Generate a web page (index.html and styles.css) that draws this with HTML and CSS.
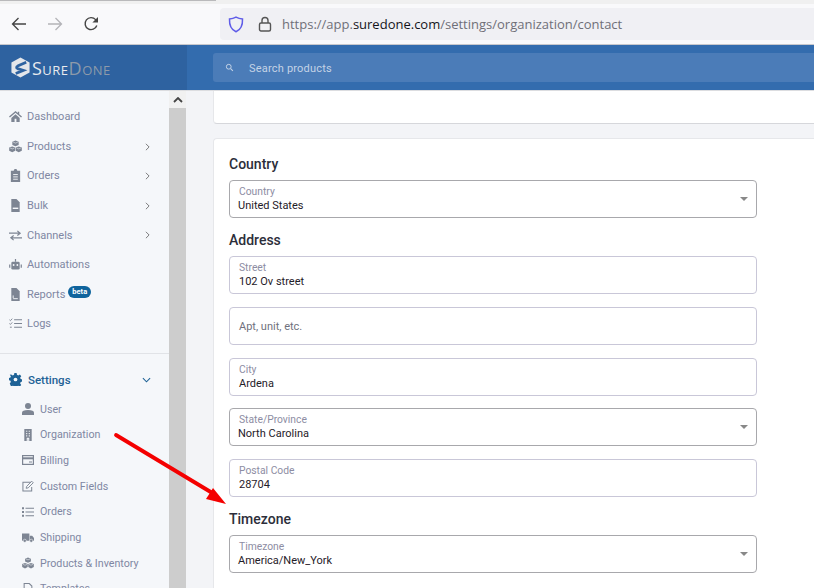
FILE: index.html
```html
<!DOCTYPE html>
<html lang="en">
<head>
<meta charset="utf-8">
<title>SureDone - Contact</title>
<link rel="stylesheet" href="styles.css">
</head>
<body>
<div class="page">
  <header class="browser">
    <div class="topstrip"><div class="topstrip-dark"></div></div>
    <div class="toolbar">
      <div class="navbtns">
        <svg class="nav" viewBox="0 0 16 16"><path d="M15 8H1.500M7.500 2L1.500 8l6 6" fill="none" stroke="#444" stroke-width="1.300"/></svg>
        <svg class="nav" viewBox="0 0 16 16"><path d="M1 8h13.500M8.500 2l6 6-6 6" fill="none" stroke="#b4b4b8" stroke-width="1.300"/></svg>
        <svg class="nav" viewBox="0 0 16 16"><path d="M13.800 9.500A6 6 0 1 1 12.600 3.600L14.500 5.500" fill="none" stroke="#444" stroke-width="1.400"/><path d="M15 1v5.600H9.400z" fill="#444"/></svg>
      </div>
      <div class="urlbar">
        <svg class="shield" viewBox="0 0 16 17"><path d="M8 1.200c2 1.100 4.200 1.700 6.500 1.800.3 6-1.800 10.700-6.500 12.800C3.300 13.700 1.200 9 1.500 3 3.800 2.900 6 2.300 8 1.200z" fill="none" stroke="#5f5ce8" stroke-width="1.500"/></svg>
        <svg class="lock" viewBox="0 0 14 16"><rect x="1.500" y="7" width="11" height="8" rx="1.500" fill="none" stroke="#555" stroke-width="1.400"/><path d="M4 7V4.500a3 3 0 0 1 6 0V7" fill="none" stroke="#555" stroke-width="1.400"/></svg>
        <span class="url">https://app.<b>suredone.com</b>/settings/organization/contact</span>
      </div>
    </div>
  </header>

  <div class="apphead">
    <div class="brand">
      <svg class="logo" viewBox="0 0 22 22"><path d="M11 .5l9.500 5.300v10.400L11 21.500 1.500 16.200V5.800z" fill="#e4e6ea"/><path d="M17 5.500L8 9.500c-1.500.8-1.500 2 0 2.700l6 1.800-8 3.200" fill="none" stroke="#2e62a0" stroke-width="2.800"/></svg>
      <span class="brandname"><span class="sure">Sure</span><span class="done">Done</span></span>
    </div>
    <div class="searchwrap">
      <div class="search">
        <svg class="searchicon" viewBox="0 0 12 12"><circle cx="5" cy="5" r="3.200" fill="none" stroke="#c4d3e6" stroke-width="1.300"/><path d="M7.500 7.500l3 3" stroke="#c4d3e6" stroke-width="1.500"/></svg>
        <span class="searchtext">Search products</span>
      </div>
    </div>
  </div>

  <div class="body">
    <nav class="sidebar">
      <ul class="menu">
        <li><svg class="ic" viewBox="0 0 14 12"><path d="M7 0L0 6l1 1 6-5 6 5 1-1-3-2.500V1H9.500v1.200zM2.500 7.500V12H6V8.500h2V12h3.500V7.500L7 3.500z" fill="#7d8593"/></svg>Dashboard</li>
        <li><svg class="ic" viewBox="0 0 14 13"><path d="M7 0l3.400 1.400v3.400L7 6.200 3.600 4.800V1.400zM3.500 6.400l3.200 1.300v3.500L3.500 12.800.2 11.200V7.700zM10.500 6.400l3.300 1.300v3.500l-3.300 1.600-3.200-1.600V7.700z" fill="#7d8593"/><path d="M4.500 1.800L7 2.800l2.500-1M1.200 8.100l2.300 1 2.300-1M8.200 8.100l2.300 1 2.300-1" fill="none" stroke="#f5f7fa" stroke-width=".6"/></svg>Products<svg class="chev" viewBox="0 0 6 10"><path d="M1 1l4 4-4 4" fill="none" stroke="#777" stroke-width="1.200"/></svg></li>
        <li><svg class="ic" viewBox="0 0 14 14"><path d="M2 2h3l1-2h2l1 2h3v12H2z" fill="#7d8593"/><path d="M4.500 6h5M4.500 8.500h5M4.500 11h5" stroke="#f5f7fa"/></svg>Orders<svg class="chev" viewBox="0 0 6 10"><path d="M1 1l4 4-4 4" fill="none" stroke="#777" stroke-width="1.200"/></svg></li>
        <li><svg class="ic" viewBox="0 0 14 14"><path d="M2.500 0H8l3.500 3.500V14h-9z" fill="#7d8593"/><path d="M4 10h6" stroke="#f5f7fa" stroke-width="1.500"/></svg>Bulk<svg class="chev" viewBox="0 0 6 10"><path d="M1 1l4 4-4 4" fill="none" stroke="#777" stroke-width="1.200"/></svg></li>
        <li><svg class="ic" viewBox="0 0 14 12"><path d="M0 3.500h11M9 1l3 2.500L9 6M14 8.500H3M5 6l-3 2.500L5 11" fill="none" stroke="#7d8593" stroke-width="1.300"/></svg>Channels<svg class="chev" viewBox="0 0 6 10"><path d="M1 1l4 4-4 4" fill="none" stroke="#777" stroke-width="1.200"/></svg></li>
        <li><svg class="ic" viewBox="0 0 14 12"><rect x="2.500" y="3" width="9" height="8.500" rx="1.500" fill="#7d8593"/><path d="M7 0v3M.8 6v3.500M13.200 6v3.500" stroke="#7d8593" stroke-width="1.300"/><circle cx="5" cy="6.500" r="1" fill="#f5f7fa"/><circle cx="9" cy="6.500" r="1" fill="#f5f7fa"/></svg>Automations</li>
        <li><svg class="ic" viewBox="0 0 14 14"><path d="M2.500 0H8l3.500 3.500V14h-9z" fill="#7d8593"/><path d="M4.500 11.500h5M4.500 11V8" stroke="#f5f7fa"/></svg>Reports<span class="beta">beta</span></li>
        <li><svg class="ic" viewBox="0 0 14 12"><path d="M5.500 2h8.500M5.500 6h8.500M5.500 10h8.500" stroke="#7d8593" stroke-width="1.200"/><path d="M.5 2l1 1 2-2.200M.5 6l1 1 2-2.200M1 10h2" fill="none" stroke="#7d8593" stroke-width="1"/></svg>Logs</li>
      </ul>
      <div class="divider"></div>
      <div class="settings"><svg class="ic" viewBox="0 0 14 14"><path d="M5.800 0h2.400l.4 2 1.300.6 1.800-1 1.500 1.800-1.200 1.600.4 1.300 1.600.7v2.200l-1.600.7-.4 1.300 1.200 1.600-1.500 1.800-1.800-1-1.300.6-.4 2H5.800l-.4-2-1.300-.6-1.800 1L.8 11.300 2 9.700l-.4-1.300L0 7.700V5.500l1.600-.7L2 3.500.8 1.900l1.500-.3 1.800 1 1.300-.6z" fill="#1e6296"/><circle cx="7" cy="7" r="2" fill="#f5f7fa"/></svg>Settings<svg class="chevd" viewBox="0 0 10 6"><path d="M1 1l4 4 4-4" fill="none" stroke="#1e6296" stroke-width="1.200"/></svg></div>
      <ul class="submenu">
        <li><svg class="ic" viewBox="0 0 12 12"><circle cx="6" cy="3" r="3" fill="#7d8593"/><path d="M0 12V9.500C0 8 2 7 6 7s6 1 6 2.500V12z" fill="#7d8593"/></svg>User</li>
        <li><svg class="ic" viewBox="0 0 12 13"><path d="M2 0h8v13H2z" fill="#7d8593"/><path d="M4 2.500h1.200M6.800 2.500H8M4 5h1.200M6.800 5H8M4 7.500h1.200M6.800 7.500H8M5.200 13v-3h1.600v3" stroke="#f5f7fa" stroke-width="1.200" fill="none"/></svg>Organization</li>
        <li><svg class="ic" viewBox="0 0 12 10"><rect x=".6" y=".6" width="10.800" height="8.800" fill="none" stroke="#7d8593" stroke-width="1.200"/><path d="M.6 3.300h10.800" stroke="#7d8593" stroke-width="2"/><path d="M7 7h3" stroke="#7d8593"/></svg>Billing</li>
        <li><svg class="ic" viewBox="0 0 13 12"><path d="M9.500 2H1v9.500h9.500V7" fill="none" stroke="#7d8593" stroke-width="1.100"/><path d="M4.500 8.500l.5-2L10.500.8l1.700 1.700-5.500 5.500z" fill="none" stroke="#7d8593"/></svg>Custom Fields</li>
        <li><svg class="ic" viewBox="0 0 12 10"><path d="M3.500 1.200H12M3.500 5H12M3.500 8.800H12" stroke="#7d8593" stroke-width="1.100"/><path d="M0 .2h2v2H0zM0 4h2v2H0zM0 7.800h2v2H0z" fill="#7d8593"/></svg>Orders</li>
        <li><svg class="ic" viewBox="0 0 13 10"><path d="M0 0h8v8H0zM8.500 2.500h2.500l2 2.500v3H8.500z" fill="#7d8593"/><circle cx="3" cy="8" r="1.700" fill="#7d8593" stroke="#f5f7fa" stroke-width=".6"/><circle cx="10" cy="8" r="1.700" fill="#7d8593" stroke="#f5f7fa" stroke-width=".6"/></svg>Shipping</li>
        <li><svg class="ic" viewBox="0 0 14 13"><path d="M7 0l3.400 1.400v3.400L7 6.200 3.600 4.800V1.400zM3.500 6.400l3.200 1.300v3.500L3.500 12.800.2 11.200V7.700zM10.500 6.400l3.300 1.300v3.500l-3.300 1.600-3.200-1.600V7.700z" fill="#7d8593"/><path d="M4.500 1.800L7 2.800l2.500-1M1.200 8.100l2.300 1 2.300-1M8.200 8.100l2.300 1 2.300-1" fill="none" stroke="#f5f7fa" stroke-width=".6"/></svg>Products &amp; Inventory</li>
        <li><svg class="ic" viewBox="0 0 12 14"><path d="M1.500.6H7.500l3 3V13.400h-9z" fill="none" stroke="#7d8593" stroke-width="1.200"/></svg>Templates</li>
      </ul>
    </nav>

    <div class="scrollbar"><div class="scrollup"><svg viewBox="0 0 10 6"><path d="M1 5l4-4 4 4" fill="none" stroke="#444" stroke-width="1.800"/></svg></div></div>

    <main class="content">
      <div class="card card-top"></div>
      <div class="card card-form">
        <h2>Country</h2>
        <div class="field select"><label>Country</label><div class="value">United States</div><i class="caret"></i></div>
        <h2>Address</h2>
        <div class="stack">
          <div class="field"><label>Street</label><div class="value">102 Ov street</div></div>
          <div class="field empty"><span class="placeholder">Apt, unit, etc.</span></div>
          <div class="field"><label>City</label><div class="value">Ardena</div></div>
          <div class="field select"><label>State/Province</label><div class="value">North Carolina</div><i class="caret"></i></div>
          <div class="field"><label>Postal Code</label><div class="value">28704</div></div>
        </div>
        <h2>Timezone</h2>
        <div class="field select"><label>Timezone</label><div class="value">America/New_York</div><i class="caret"></i></div>
      </div>
    </main>
  </div>

  <svg class="arrow" viewBox="0 0 814 588"><path d="M116 435L214 494" stroke="#f40000" stroke-width="3.800" stroke-linecap="round"/><path d="M226 504L206 499L213 488z" fill="#f40000"/></svg>
</div>
</body>
</html>
```
FILE: styles.css
```css
* { box-sizing: border-box; }
html, body { margin: 0; padding: 0; height: 100%; overflow: hidden; background: #fff; }
body { font-family: Roboto, "Liberation Sans", sans-serif; }
ul { list-style: none; margin: 0; padding: 0; }

.page { position: relative; width: 814px; height: 588px; display: flex; flex-direction: column; overflow: hidden; }

.browser { height: 45px; flex: none; background: #f9f9fb; border-bottom: 1px solid #c8c8cc; }
.topstrip { height: 4px; background: #f0f0f0; }
.topstrip-dark { width: 216px; height: 1px; background: #b9b9bb; }
.toolbar { height: 40px; display: flex; align-items: center; }
.navbtns { width: 220px; padding-left: 11px; display: flex; align-items: center; gap: 20px; }
.nav { width: 16px; height: 16px; }
.urlbar { flex: 1; height: 32px; background: #f0f0f4; border-radius: 4px 0 0 4px; display: flex; align-items: center; padding-left: 8px; }
.shield { width: 16px; height: 17px; }
.lock { width: 14px; height: 16px; margin-left: 14px; }
.url { margin-left: 10px; font-family: "Open Sans", sans-serif; font-size: 13px; color: #6f6f78; white-space: nowrap; }
.url b { font-weight: 400; color: #15141a; }

.apphead { height: 45px; flex: none; display: flex; background: #336cae; }
.brand { width: 187px; background: #2e62a0; display: flex; align-items: center; padding-left: 10px; gap: 1px; }
.logo { width: 21px; height: 21px; }
.brandname { font-family: "Open Sans", sans-serif; font-size: 18px; font-variant: small-caps; letter-spacing: .5px; line-height: 1; }
.sure { color: #e8eaee; }
.done { color: #8d9aaa; }
.searchwrap { flex: 1; padding: 8px 0 8px 26px; }
.search { height: 29px; background: #4b7cb8; border-radius: 3px 0 0 3px; display: flex; align-items: center; padding-left: 12px; font-size: 11px; letter-spacing: .2px; color: #c4d3e6; }
.searchicon { width: 9px; height: 9px; margin-right: 15px; }
.searchtext { padding-top: 2px; }

.body { flex: 1; display: flex; min-height: 0; border-top: 1px solid #dcdde0; background: #f3f4f7; }
.sidebar { width: 169px; flex: none; background: #f5f7fa; padding-top: 11px; overflow: hidden; }
.menu li { height: 29.600px; display: flex; align-items: center; padding-left: 9px; font-size: 11px; color: #8087a3; position: relative; }
.ic { width: 13px; height: 13px; flex: none; margin-right: 5px; }
.chev { width: 5px; height: 8px; position: absolute; left: 145px; top: 11px; }
.beta { background: #0f649d; color: #fff; font-size: 7.5px; font-weight: 700; line-height: 12px; height: 12px; padding: 0 4px; border-radius: 6px; margin-left: 3px; margin-top: -5px; }
.divider { height: 1px; background: #e1e3e7; margin-top: 14px; }
.settings { height: 26px; margin-top: 13px; display: flex; align-items: center; padding-left: 9px; font-size: 11.500px; font-weight: 500; color: #1e6296; position: relative; }
.settings .ic { margin-right: 6px; }
.chevd { width: 9px; height: 6px; position: absolute; left: 142px; top: 10px; }
.submenu { margin-top: 3.500px; }
.submenu li { height: 25.700px; display: flex; align-items: center; padding-left: 22px; font-size: 10.700px; color: #8087a3; }
.submenu .ic { width: 12px; height: 12px; margin-right: 6px; }

.scrollbar { width: 17px; flex: none; background: #cdcdcd; }
.scrollup { height: 17px; background: #f1f1f1; display: flex; align-items: center; justify-content: center; }
.scrollup svg { width: 10px; height: 6px; }

.content { flex: 1; min-width: 0; padding-left: 27px; }
.card { background: #fff; border: 1px solid #e6e7ea; border-right: 0; border-radius: 4px 0 0 4px; }
.card-top { height: 33px; border-top: 0; border-bottom: 1px solid #d6d7db; border-radius: 0 0 0 4px; }
.card-form { margin-top: 14px; height: 460px; padding: 15px 0 0 15px; }
h2 { margin: 0; width: 528px; font-size: 14px; font-weight: 500; line-height: 20px; color: #2c2e3a; }
.card-form h2 { margin-bottom: 6px; }
.field { position: relative; width: 528px; height: 38px; background: #fff; border: 1px solid #c9c7d8; border-radius: 4px; padding: 5px 9px 0; }
.field + h2 { margin-top: 12px; }
.stack { display: flex; flex-direction: column; gap: 12.750px; margin-bottom: 12px; }
.select { border-color: #a8a8ac; padding-left: 8px; }
.select label { padding-left: 1px; }
label { display: block; font-size: 10.300px; line-height: 12px; color: #8d8da3; }
.value { font-size: 11px; line-height: 14px; margin-top: 1px; color: #1f2028; }
.empty { display: flex; align-items: center; padding-top: 2px; }
.placeholder { font-size: 11px; color: #70717d; }
.caret { position: absolute; right: 8px; top: 16px; width: 0; height: 0; border-left: 4px solid transparent; border-right: 4px solid transparent; border-top: 4px solid #888; }

.arrow { position: absolute; left: 0; top: 0; width: 814px; height: 588px; pointer-events: none; }
```
